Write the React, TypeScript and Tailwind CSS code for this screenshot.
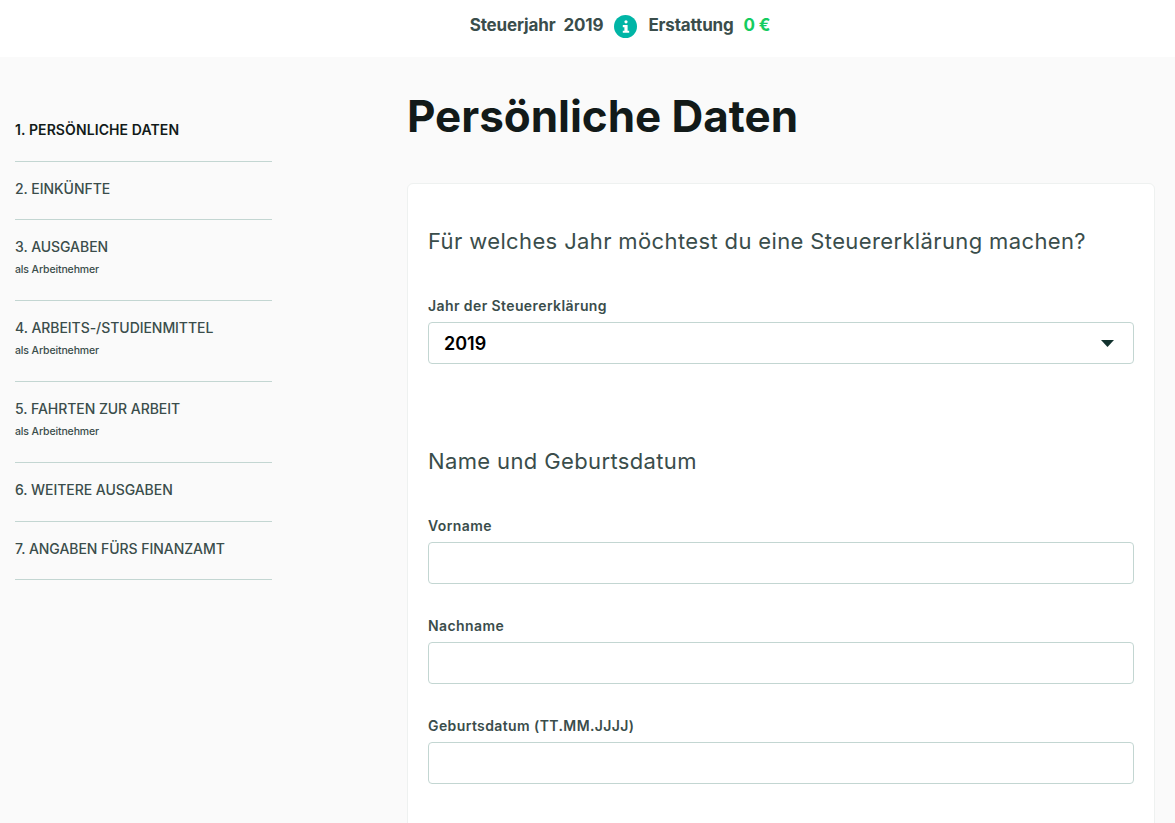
const steps = [
  { title: '1. PERSÖNLICHE DATEN', active: true },
  { title: '2. EINKÜNFTE' },
  { title: '3. AUSGABEN', sub: 'als Arbeitnehmer' },
  { title: '4. ARBEITS-/STUDIENMITTEL', sub: 'als Arbeitnehmer' },
  { title: '5. FAHRTEN ZUR ARBEIT', sub: 'als Arbeitnehmer' },
  { title: '6. WEITERE AUSGABEN' },
  { title: '7. ANGABEN FÜRS FINANZAMT' },
];

function Field({ label }: { label: string }) {
  return (
    <div className="mb-[32px]">
      <label className="block h-[26px] text-[14px] leading-[18px] pt-[1px] font-semibold tracking-[0.4px]">
        {label}
      </label>
      <input
        type="text"
        className="block w-full h-[42px] rounded-[4px] border border-[#c3d6d2] bg-white px-4 outline-none"
      />
    </div>
  );
}

export default function App() {
  return (
    <div className="h-[823px] overflow-hidden bg-[#fafafa] text-[#3a4d4b] font-['Inter','Liberation_Sans',sans-serif]">
      <header className="flex h-[57px] items-center justify-center bg-white pb-[5px] pl-[65px] text-[17px] font-bold tracking-[-0.15px]">
        <span>Steuerjahr</span>
        <span className="ml-[8px]">2019</span>
        <span className="mx-[11px] flex size-[23px] items-center justify-center rounded-full bg-[#00b5a6]">
          <svg viewBox="0 0 10 16" className="h-[13px] w-[8px]" fill="#fff">
            <circle cx="5" cy="2.2" r="2" />
            <path d="M1 6.2h6v7h2v2.6H1v-2.6h2V8.8H1z" />
          </svg>
        </span>
        <span>Erstattung</span>
        <span className="ml-[10px] text-[#14cc60]">0 €</span>
      </header>

      <div className="flex">
        <nav className="ml-[15px] w-[257px] shrink-0 pt-[47px]">
          {steps.map((step) => (
            <div
              key={step.title}
              className={
                'border-b border-[#c3d6d2] ' +
                (step.sub ? 'h-[81px] pt-[18px]' : step.active ? 'h-[58px] pt-[17px]' : 'h-[58.4px] pt-[18px]')
              }
            >
              <div
                className={
                  'text-[14px] leading-[18px] ' +
                  (step.active ? 'font-semibold tracking-[0.1px] text-[#121a19]' : 'font-medium tracking-[-0.05px]')
                }
              >
                {step.title}
              </div>
              {step.sub && (
                <div className="mt-[8px] text-[10.5px] leading-[12px] font-medium tracking-[-0.12px]">{step.sub}</div>
              )}
            </div>
          ))}
        </nav>

        <main className="ml-[135px] w-[748px] shrink-0">
          <h1 className="h-[126px] pt-[30px] text-[44px] leading-[58px] font-bold tracking-[-0.04px] text-[#121a19]">
            Persönliche Daten
          </h1>
          <section className="rounded-t-[6px] border border-[#eef1f0] bg-white px-[20px] pt-[43px] pb-[40px]">
            <h2 className="h-[69px] text-[22px] leading-[29px] tracking-[0.37px]">
              Für welches Jahr möchtest du eine Steuererklärung machen?
            </h2>
            <div>
              <label className="block h-[26px] text-[14px] leading-[18px] pt-[1px] font-semibold tracking-[0.4px]">
                Jahr der Steuererklärung
              </label>
              <div className="flex h-[42px] items-center justify-between rounded-[4px] border border-[#c3d6d2] bg-white pl-[15px] pr-[19px]">
                <span className="text-[18px] font-semibold text-black">2019</span>
                <svg viewBox="0 0 13 7" className="h-[7px] w-[13px]" fill="#12322e">
                  <path d="M0 0h13L6.5 7z" />
                </svg>
              </div>
            </div>
            <h2 className="mt-[83px] h-[69px] text-[22px] leading-[29px] tracking-[0.37px]">Name und Geburtsdatum</h2>
            <Field label="Vorname" />
            <Field label="Nachname" />
            <Field label="Geburtsdatum (TT.MM.JJJJ)" />
          </section>
        </main>
      </div>
    </div>
  );
}
